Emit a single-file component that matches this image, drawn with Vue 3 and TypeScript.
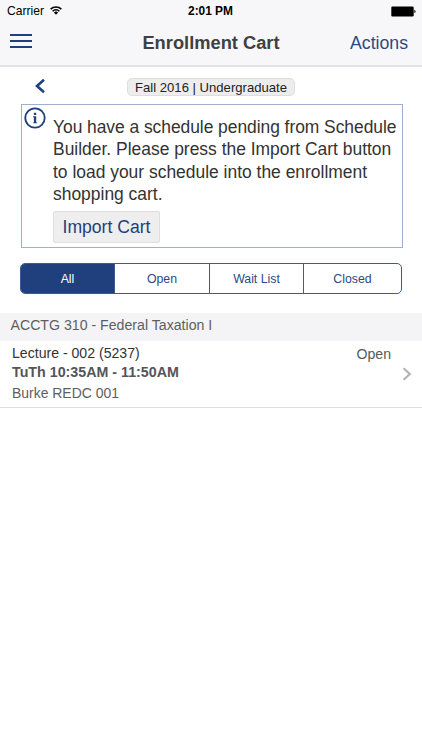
<script setup lang="ts">
import { ref } from 'vue'

type Filter = 'All' | 'Open' | 'Wait List' | 'Closed'

interface Section {
  id: number
  name: string
  time: string
  room: string
  status: string
}

const filters: Filter[] = ['All', 'Open', 'Wait List', 'Closed']
const active = ref<Filter>('All')
const course = 'ACCTG 310 - Federal Taxation I'
const sections: Section[] = [
  { id: 5237, name: 'Lecture - 002 (5237)', time: 'TuTh 10:35AM - 11:50AM', room: 'Burke REDC 001', status: 'Open' },
]
</script>

<template>
  <div class="screen">
    <header class="top">
      <div class="status">
        <div class="carrier">
          <span>Carrier</span>
          <svg class="wifi" width="12" height="9" viewBox="0 0 12 9">
            <path d="M0.6 3.1A7.7 7.7 0 0 1 11.4 3.1M2.6 5.2A4.8 4.8 0 0 1 9.4 5.2" fill="none" stroke="#000" stroke-width="1.5" />
            <path d="M3.9 6.6A3 3 0 0 1 8.1 6.6L6 8.8Z" fill="#000" />
          </svg>
        </div>
        <span class="clock">2:01 PM</span>
        <svg class="battery" width="26" height="11" viewBox="0 0 26 11">
          <rect x="0.3" y="0.6" width="22.4" height="9.8" rx="1.2" fill="#000" />
          <path d="M23.4 3.8C25 4.2 25 6.8 23.4 7.2Z" fill="#000" />
        </svg>
      </div>
      <nav class="nav">
        <button class="menu" aria-label="Menu"><i></i><i></i><i></i></button>
        <h1>Enrollment Cart</h1>
        <a class="actions">Actions</a>
      </nav>
    </header>

    <div class="term">
      <svg class="back" width="12" height="16" viewBox="0 0 12 16">
        <path d="M10 1.8L3 8L10 14.2" fill="none" stroke="#1f407c" stroke-width="2.6" />
      </svg>
      <span class="pill">Fall 2016 | Undergraduate</span>
    </div>

    <section class="notice">
      <svg class="info" width="22" height="22" viewBox="0 0 22 22">
        <circle cx="11" cy="11" r="9.7" fill="none" stroke="#1f407c" stroke-width="1.8" />
        <rect x="9.9" y="5.8" width="2.3" height="2.2" fill="#1f407c" />
        <path d="M9 9.3H12.2V15.4H13.2V16.3H9V15.4H9.9V10.2H9Z" fill="#1f407c" />
      </svg>
      <div class="message">
        <p>
          You have a schedule pending from Schedule<br />
          Builder. Please press the Import Cart button<br />
          to load your schedule into the enrollment<br />
          shopping cart.
        </p>
        <button class="import">Import Cart</button>
      </div>
    </section>

    <div class="tabs">
      <button v-for="f in filters" :key="f" :class="{ on: f === active }" @click="active = f">{{ f }}</button>
    </div>

    <h2>{{ course }}</h2>
    <article v-for="s in sections" :key="s.id" class="row">
      <div class="details">
        <div class="name">{{ s.name }}</div>
        <div class="time">{{ s.time }}</div>
        <div class="room">{{ s.room }}</div>
      </div>
      <span class="state">{{ s.status }}</span>
      <svg class="chevron" width="10" height="14" viewBox="0 0 10 14">
        <path d="M1.6 1.2L7.8 7L1.6 12.8" fill="none" stroke="#b3b3b5" stroke-width="2.2" />
      </svg>
    </article>
  </div>
</template>

<style>
body {
  background: #fff;
}
</style>

<style scoped>
.screen {
  height: 750px;
  background: #fff;
  font-family: "Liberation Sans", Arial, sans-serif;
  color: #333;
  white-space: nowrap;
  overflow: hidden;
}
button {
  font-family: inherit;
  margin: 0;
  padding: 0;
  border: 0;
  background: none;
}
.top {
  box-sizing: border-box;
  height: 67px;
  background: #f7f7f9;
  border-bottom: 2px solid #e2e2e4;
}
.status {
  display: grid;
  grid-template-columns: 1fr auto 1fr;
  align-items: center;
  height: 22px;
  padding: 0 5px 0 7px;
  font-size: 12.1px;
  color: #000;
}
.carrier {
  display: flex;
  align-items: center;
  gap: 6px;
}
.wifi {
  margin-top: -2px;
}
.clock {
  margin-right: 3px;
  font-weight: bold;
  font-size: 11.9px;
}
.battery {
  justify-self: end;
}
.nav {
  display: grid;
  grid-template-columns: 1fr auto 1fr;
  align-items: center;
  height: 43px;
  padding: 0 14px 0 10px;
}
.menu {
  display: flex;
  flex-direction: column;
  gap: 4px;
  width: 22px;
  margin-top: -5px;
}
.menu i {
  height: 2px;
  background: #1f407c;
}
h1 {
  margin: 0 0 1px 4px;
  font-size: 18.3px;
  line-height: 22px;
  color: #404043;
}
.actions {
  justify-self: end;
  font-size: 17.7px;
  color: #2b4a84;
}
.term {
  display: grid;
  grid-template-columns: 1fr auto 1fr;
  align-items: center;
  height: 37px;
  padding: 0 35px;
}
.back {
  margin-top: 1px;
  margin-left: -1px;
}
.pill {
  box-sizing: border-box;
  width: 168px;
  height: 18px;
  margin-top: 3px;
  border: 1px solid #dedede;
  border-radius: 5px;
  background: #ededed;
  font-size: 13.1px;
  line-height: 17px;
  text-align: center;
  color: #222;
}
.notice {
  box-sizing: border-box;
  display: flex;
  width: 382px;
  height: 144px;
  margin-left: 21px;
  border: 1px solid #9db0cf;
}
.info {
  flex: none;
  margin: 2px 7px 0 2px;
}
.message p {
  margin: 11px 0 5px;
  font-size: 17.46px;
  line-height: 22.4px;
}
.message p::first-line {
  letter-spacing: -0.05px;
}
.import {
  display: block;
  width: 107px;
  height: 32px;
  padding-top: 1px;
  border: 1px solid #dedede;
  border-radius: 2px;
  background: #eee;
  font-size: 17.6px;
  color: #1f407c;
}
.tabs {
  box-sizing: border-box;
  display: grid;
  grid-template-columns: 93px 95px 94px 1fr;
  width: 382px;
  height: 31px;
  margin: 15px 0 0 20px;
  border: 1px solid #3c5b90;
  border-radius: 5px;
  overflow: hidden;
}
.tabs button {
  font-size: 12.3px;
  color: #2b4a84;
  border-left: 1px solid #3c5b90;
}
.tabs button:first-child {
  border-left: 0;
}
.tabs .on {
  background: #1f407c;
  color: #fff;
}
h2 {
  height: 28px;
  margin: 19px 0 0;
  padding-left: 10.5px;
  background: #f4f4f7;
  font-size: 14.15px;
  font-weight: normal;
  line-height: 25px;
  color: #5e5e61;
}
.row {
  box-sizing: border-box;
  display: flex;
  height: 67px;
  padding: 2px 10px 0 12px;
  border-bottom: 1px solid #dcdedf;
  font-size: 14.1px;
}
.details {
  flex: 1;
}
.name {
  line-height: 20px;
}
.time {
  font-size: 14.25px;
  font-weight: bold;
  line-height: 19px;
  color: #555558;
}
.room {
  font-size: 13.95px;
  line-height: 23px;
  color: #5e5e61;
}
.state {
  line-height: 22px;
  color: #58585b;
}
.chevron {
  margin: 24px 0 0 11px;
}
</style>
